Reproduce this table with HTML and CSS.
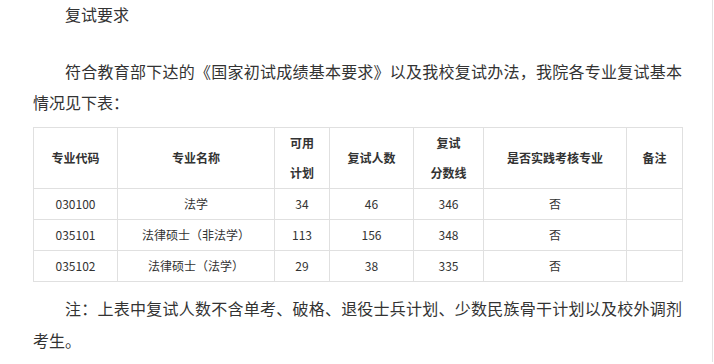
FILE: index.html
```html
<!DOCTYPE html>
<html lang="zh-CN">
<head>
<meta charset="utf-8">
<title>复试要求</title>
<link rel="stylesheet" href="styles.css">
</head>
<body>
<div class="page">
  <div class="content">
    <p class="para title">复试要求</p>
    <p class="para lead">符合教育部下达的《国家初试成绩基本要求》以及我校复试办法，我院各专业复试基本情况见下表：</p>
    <table class="grid">
      <colgroup>
        <col class="c1"><col class="c2"><col class="c3"><col class="c4"><col class="c5"><col class="c6"><col class="c7">
      </colgroup>
      <thead>
        <tr>
          <th>专业代码</th>
          <th>专业名称</th>
          <th>可用<br>计划</th>
          <th>复试人数</th>
          <th>复试<br>分数线</th>
          <th>是否实践考核专业</th>
          <th>备注</th>
        </tr>
      </thead>
      <tbody>
        <tr><td>030100</td><td>法学</td><td>34</td><td>46</td><td>346</td><td>否</td><td></td></tr>
        <tr><td>035101</td><td>法律硕士（非法学）</td><td>113</td><td>156</td><td>348</td><td>否</td><td></td></tr>
        <tr><td>035102</td><td>法律硕士（法学）</td><td>29</td><td>38</td><td>335</td><td>否</td><td></td></tr>
      </tbody>
    </table>
    <p class="para note">注：上表中复试人数不含单考、破格、退役士兵计划、少数民族骨干计划以及校外调剂考生。</p>
  </div>
</div>
</body>
</html>
```

FILE: styles.css
```css
html, body {
  margin: 0;
  padding: 0;
  background: #fff;
}
body {
  font-family: "Noto Sans CJK SC", "Microsoft YaHei", sans-serif;
  color: #333;
  overflow: hidden;
}
.page {
  width: 712px;
  height: 364px;
  border-right: 1px solid #e2e2e2;
  box-sizing: content-box;
}
.content {
  width: 649px;
  padding-left: 33px;
}
.para {
  margin: 0;
  font-size: 16px;
  line-height: 32px;
  text-indent: 32px;
  text-align: justify;
}
.title {
  margin-top: -2px;
}
.lead {
  margin-top: 26px;
  line-height: 31px;
}
.note {
  margin-top: 10px;
}
.grid {
  margin-top: 9px;
  border-collapse: collapse;
  table-layout: fixed;
  width: 650px;
  font-size: 12px;
  color: #333;
}
.c1 { width: 84px; }
.c2 { width: 157px; }
.c3 { width: 55px; }
.c4 { width: 84px; }
.c5 { width: 70px; }
.c6 { width: 143px; }
.c7 { width: 56px; }
.grid th, .grid td {
  border: 1px solid #e0e0e0;
  padding: 0;
  text-align: center;
  vertical-align: middle;
  line-height: 30px;
  height: 30px;
}
.grid th {
  font-weight: bold;
  height: 60px;
}
```
